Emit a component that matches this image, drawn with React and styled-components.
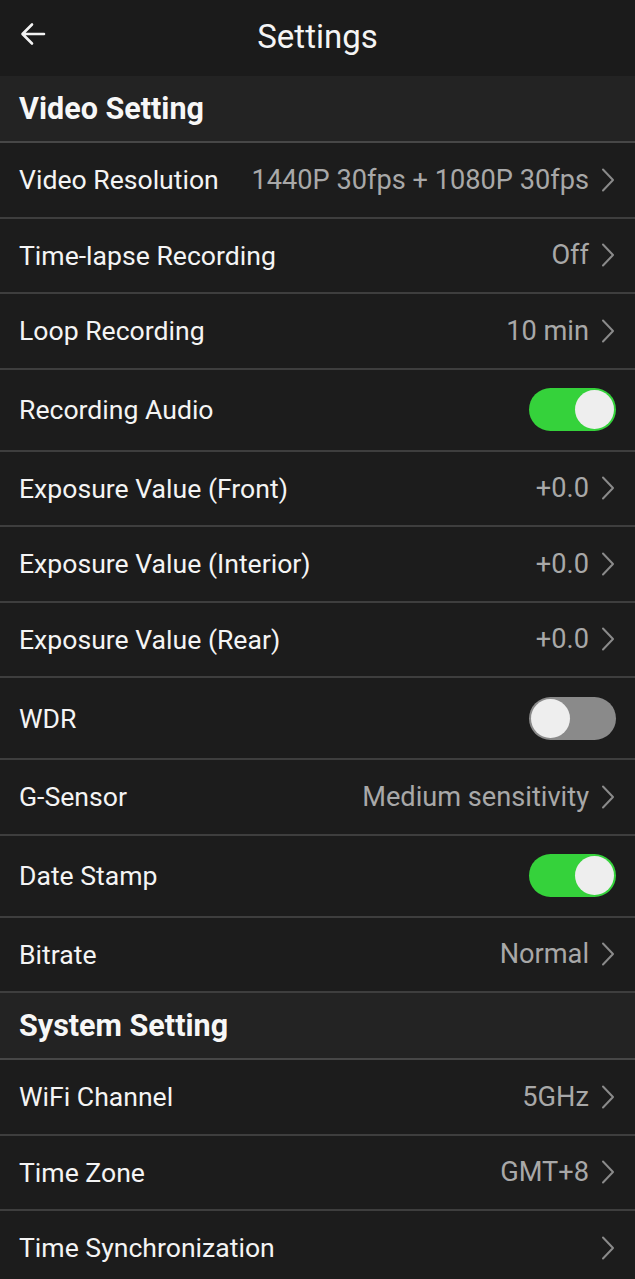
import React from "react";
import styled, { createGlobalStyle } from "styled-components";

const GlobalStyle = createGlobalStyle`
  html, body {
    margin: 0;
    padding: 0;
    background: #1c1c1c;
  }
  body {
    font-family: Roboto, "Noto Sans", "Liberation Sans", sans-serif;
  }
`;

// rows of the page, in order
const sections = [
  {
    title: "Video Setting",
    rows: [
      { label: "Video Resolution", value: "1440P 30fps + 1080P 30fps" },
      { label: "Time-lapse Recording", value: "Off" },
      { label: "Loop Recording", value: "10 min" },
      { label: "Recording Audio", toggle: true, on: true },
      { label: "Exposure Value (Front)", value: "+0.0" },
      { label: "Exposure Value (Interior)", value: "+0.0" },
      { label: "Exposure Value (Rear)", value: "+0.0" },
      { label: "WDR", toggle: true, on: false },
      { label: "G-Sensor", value: "Medium sensitivity" },
      { label: "Date Stamp", toggle: true, on: true },
      { label: "Bitrate", value: "Normal" },
    ],
  },
  {
    title: "System Setting",
    rows: [
      { label: "WiFi Channel", value: "5GHz" },
      { label: "Time Zone", value: "GMT+8" },
      { label: "Time Synchronization", value: "" },
    ],
  },
];

const Chevron = () => (
  <svg width="14" height="24" viewBox="0 0 14 24" fill="none">
    <path
      d="M2 1.5 L12 12 L2 22.5"
      stroke="#8a8a8a"
      strokeWidth="2"
      strokeLinecap="round"
      strokeLinejoin="round"
    />
  </svg>
);

const BackArrow = () => (
  <svg width="28" height="28" viewBox="0 0 28 28" fill="none">
    <path
      d="M25 14 H4 M13 4.5 L3.5 14 L13 23.5"
      stroke="#f2f2f2"
      strokeWidth="2.6"
      strokeLinecap="round"
      strokeLinejoin="round"
    />
  </svg>
);

const App = () => {
  return (
    <>
      <GlobalStyle />
      <Page>
        <Header>
          <BackButton>
            <BackArrow />
          </BackButton>
          <Title>Settings</Title>
        </Header>
        {sections.map(section => (
          <React.Fragment key={section.title}>
            <SectionHead>{section.title}</SectionHead>
            {section.rows.map(row => (
              <Row key={row.label} tall={row.toggle}>
                <Label>{row.label}</Label>
                {row.toggle ? (
                  <Toggle on={row.on}>
                    <Knob on={row.on} />
                  </Toggle>
                ) : (
                  <Right>
                    {row.value && <Value>{row.value}</Value>}
                    <Chevron />
                  </Right>
                )}
              </Row>
            ))}
          </React.Fragment>
        ))}
      </Page>
    </>
  );
};

export default App;

const Page = styled.div`
  width: 635px;
  height: 1279px;
  overflow: hidden;
  background: #1c1c1c;
  color: #f4f4f4;
`;

const Header = styled.div`
  height: 76px;
  position: relative;
  display: flex;
  align-items: center;
  justify-content: center;
  background: #1b1b1b;
`;

const BackButton = styled.div`
  position: absolute;
  left: 19px;
  top: 20px;
  display: flex;
`;

const Title = styled.div`
  font-size: 33px;
  font-weight: 400;
  color: #f4f4f4;
  margin-top: -4px;
`;

const SectionHead = styled.div`
  height: 65px;
  display: flex;
  align-items: center;
  padding: 0 19px;
  background: #232323;
  font-size: 30.5px;
  font-weight: 700;
  color: #f7f7f7;
  border-bottom: 2px solid #474747;
`;

const Row = styled.div`
  height: ${props => (props.tall ? "80px" : "73.5px")};
  display: flex;
  align-items: center;
  justify-content: space-between;
  padding: 0 20px 0 19px;
  border-bottom: 2px solid #3e3e3e;
  background: #1c1c1c;
`;

const Label = styled.div`
  font-size: 26.6px;
  color: #f4f4f4;
`;

const Right = styled.div`
  display: flex;
  align-items: center;
  gap: 12px;
`;

const Value = styled.div`
  font-size: 27.2px;
  color: #a8a8a8;
`;

const Toggle = styled.div`
  width: 87px;
  height: 43px;
  border-radius: 22px;
  background: ${props => (props.on ? "#35d23b" : "#8a8a8a")};
  position: relative;
  margin-right: -1px;
`;

const Knob = styled.div`
  position: absolute;
  top: 2px;
  left: ${props => (props.on ? "46px" : "2px")};
  width: 39px;
  height: 39px;
  border-radius: 50%;
  background: #eeeeee;
`;
